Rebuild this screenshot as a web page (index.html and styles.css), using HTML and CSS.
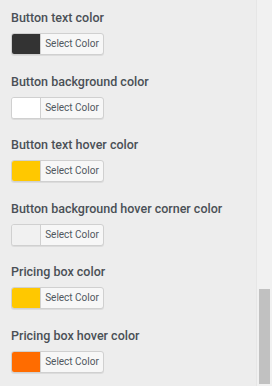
FILE: index.html
```html
<!DOCTYPE html>
<html>
<head>
<meta charset="utf-8">
<link rel="stylesheet" href="styles.css">
</head>
<body>
<div class="page">
  <div class="content">
    <div class="field">
      <div class="label">Button text color</div>
      <div class="picker"><span class="swatch" style="background:#333333"></span><span class="btn-text">Select Color</span></div>
    </div>
    <div class="field">
      <div class="label">Button background color</div>
      <div class="picker"><span class="swatch" style="background:#ffffff"></span><span class="btn-text">Select Color</span></div>
    </div>
    <div class="field">
      <div class="label">Button text hover color</div>
      <div class="picker"><span class="swatch" style="background:#ffc800"></span><span class="btn-text">Select Color</span></div>
    </div>
    <div class="field">
      <div class="label">Button background hover corner color</div>
      <div class="picker"><span class="swatch" style="background:#f1f1f1"></span><span class="btn-text">Select Color</span></div>
    </div>
    <div class="field">
      <div class="label">Pricing box color</div>
      <div class="picker"><span class="swatch" style="background:#ffc800"></span><span class="btn-text">Select Color</span></div>
    </div>
    <div class="field">
      <div class="label">Pricing box hover color</div>
      <div class="picker"><span class="swatch" style="background:#ff6c00"></span><span class="btn-text">Select Color</span></div>
    </div>
  </div>
  <div class="track"><div class="thumb"></div></div>
</div>
</body>
</html>
```
FILE: styles.css
```css
html, body {
  margin: 0;
  padding: 0;
  background: #ededed;
  height: 386px;
  overflow: hidden;
}
.page {
  display: flex;
  height: 386px;
}
.content {
  flex: 1;
  padding: 9px 0 0 11px;
  font-family: Roboto, "Liberation Sans", sans-serif;
}
.field {
  height: 63.5px;
}
.label {
  font-size: 12.5px;
  font-weight: 500;
  color: #4a5056;
  line-height: 18px;
}
.picker {
  margin-top: 6px;
  display: inline-flex;
  width: 91px;
  height: 20px;
  border: 1px solid #d0d0d0;
  border-radius: 3px;
  background: #f7f7f7;
  overflow: hidden;
  box-shadow: 0 1px 0 #dcdcdc;
}
.swatch {
  width: 28px;
  height: 20px;
  border-right: 1px solid #d0d0d0;
}
.btn-text {
  flex: 1;
  text-align: center;
  font-size: 10px;
  line-height: 20px;
  color: #50575e;
}
.track {
  width: 15px;
  background: #f1f1f1;
  border-left: 1px solid #e6e6e6;
  display: flex;
  flex-direction: column;
}
.thumb {
  margin: 289px 2px 2px 2px;
  flex: 1;
  background: #c1c1c1;
}
```
